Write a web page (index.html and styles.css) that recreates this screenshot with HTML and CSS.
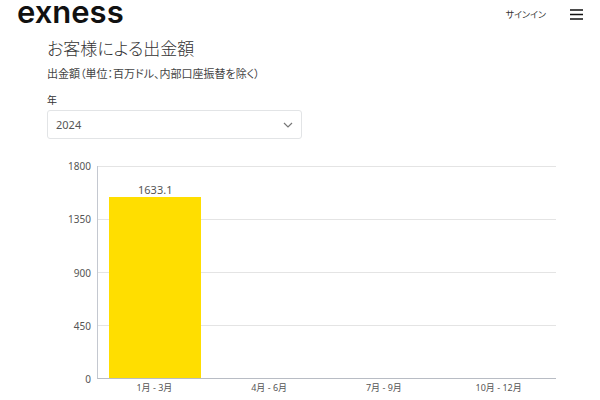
FILE: index.html
```
<!DOCTYPE html>
<html lang="ja">
<head>
    <meta charset="UTF-8">
    <meta name="viewport" content="width=device-width, initial-scale=1.0">
    <title>exness</title>
    <link rel="stylesheet" href="styles.css">
</head>
<body>
    <header class="header">
        <a class="logo" href="#">exness</a>
        <nav class="nav">
            <a class="signin" href="#">サインイン</a>
            <button class="menu" type="button" aria-label="メニュー">
                <svg width="13" height="11" viewBox="0 0 13 11"><path d="M0 1h13M0 5.500h13M0 10h13" stroke="#111" stroke-width="1.600"/></svg>
            </button>
        </nav>
    </header>

    <main class="content">
        <h1>お客様による出金額</h1>
        <p class="subtitle">出金額（単位：百万ドル、内部口座振替を除く）</p>

        <label class="year-label" for="year">年</label>
        <div class="select">
            <select id="year">
                <option>2024</option>
            </select>
            <svg width="10" height="6" viewBox="0 0 10 6"><path d="M1 1l4 4 4-4" fill="none" stroke="#777" stroke-width="1.200"/></svg>
        </div>

        <div class="chart">
            <div class="y-axis">
                <span>1800</span>
                <span>1350</span>
                <span>900</span>
                <span>450</span>
                <span>0</span>
            </div>
            <div class="plot">
                <div class="column">
                    <span class="value">1633.1</span>
                    <div class="bar" style="height: 85.4%"></div>
                </div>
            </div>
            <div class="x-axis">
                <span>1月 - 3月</span>
                <span>4月 - 6月</span>
                <span>7月 - 9月</span>
                <span>10月 - 12月</span>
            </div>
        </div>
    </main>
</body>
</html>
```

FILE: styles.css
```
body {
    margin: 0;
    background-color: #fff;
    color: #333;
    font-family: "Open Sans", "Noto Sans CJK JP", sans-serif;
    font-size: 10px;
    font-feature-settings: "palt";
}

/* header */
.header {
    display: flex;
    justify-content: space-between;
    align-items: flex-start;
    height: 28px;
    padding: 0 17px;
}

.logo {
    color: #111;
    font-family: Inter, sans-serif;
    font-size: 31px;
    font-weight: 600;
    line-height: 24px;
    text-decoration: none;
}

.nav {
    display: flex;
    align-items: center;
    gap: 24px;
    height: 28px;
}

.signin {
    color: #333;
    font-size: 9px;
    text-decoration: none;
}

.menu {
    display: flex;
    padding: 0;
    border: none;
    background: none;
    cursor: pointer;
}

/* content */
.content {
    padding: 8px 44px 0 47px;
}

h1 {
    margin: 0;
    font-size: 17px;
    font-weight: 300;
    line-height: 26px;
}

.subtitle {
    margin: 4px 0 10px;
    color: #444;
    font-size: 11px;
    line-height: 16px;
}

.year-label {
    display: block;
    margin-bottom: 2px;
    line-height: 16px;
}

.select {
    display: grid;
    align-items: center;
    width: 50%;
    max-width: 255px;
}

.select select,
.select svg {
    grid-area: 1 / 1;
}

.select svg {
    justify-self: end;
    margin-right: 9px;
    pointer-events: none;
}

select {
    width: 100%;
    height: 29px;
    padding: 0 8px;
    border: 1px solid #e2e4e6;
    border-radius: 3px;
    background-color: #fff;
    color: #555;
    font-family: "Noto Sans", sans-serif;
    font-size: 11px;
    appearance: none;
}

/* chart */
.chart {
    display: grid;
    grid-template-columns: 50px 1fr;
    margin-top: 27px;
    color: #555;
    font-family: "Noto Sans", "Noto Sans CJK JP", sans-serif;
}

.y-axis {
    display: flex;
    flex-direction: column;
    justify-content: space-between;
    margin: -6px 0;
    padding-right: 6px;
    line-height: 12px;
    text-align: right;
}

.plot {
    display: grid;
    grid-template-columns: repeat(4, 1fr);
    height: 212px;
    border-left: 1px solid #c4c8d0;
    border-bottom: 1px solid #b8bcc4;
    background: repeating-linear-gradient(#e4e4e4 0 1px, transparent 1px 53px);
}

.column {
    display: flex;
    flex-direction: column;
    justify-content: flex-end;
    align-items: center;
}

.value {
    font-size: 11px;
    line-height: 14px;
}

.bar {
    width: 80%;
    background-color: #ffde00;
}

.x-axis {
    display: grid;
    grid-column: 2;
    grid-template-columns: repeat(4, 1fr);
    padding-top: 2px;
    font-size: 9px;
    line-height: 14px;
    text-align: center;
}
```
